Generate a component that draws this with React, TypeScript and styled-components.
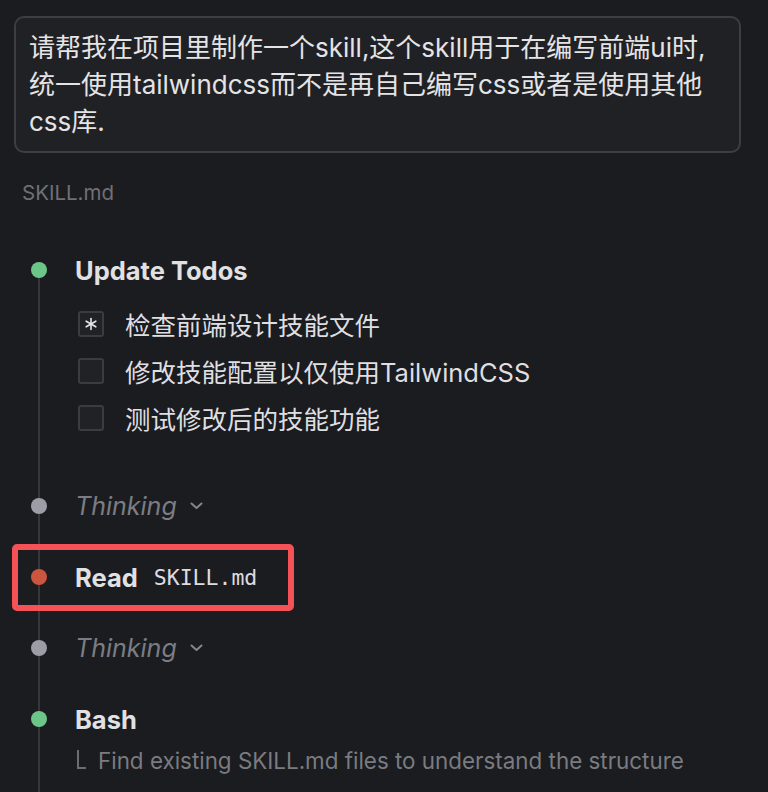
import React from "react";
import styled, { createGlobalStyle } from "styled-components";

const Global = createGlobalStyle`
  html, body { margin: 0; padding: 0; background: #1b1c1f; }
  body {
    font-family: "Inter", "Noto Sans CJK SC", sans-serif;
    color: #e2e2e5;
    -webkit-font-smoothing: antialiased;
  }
`;

const Page = styled.div`
  padding: 16px 27px 0 14px;
  height: 792px;
  box-sizing: border-box;
  overflow: hidden;
`;

const Prompt = styled.div`
  border: 2px solid #3d3e42;
  border-radius: 10px;
  background: #202125;
  padding: 11px 13px;
  font-size: 26px;
  line-height: 37px;
  color: #e4e4e7;
  font-family: "Inter", "Noto Sans CJK SC", sans-serif;
`;

const FileLabel = styled.div`
  margin-top: 26px;
  padding-left: 8px;
  font-size: 20.5px;
  line-height: 28px;
  color: #6f7075;
`;

const Timeline = styled.div`
  position: relative;
  margin-top: 45px;
  display: flex;
  flex-direction: column;
  gap: 35px;
  &::before {
    content: "";
    position: absolute;
    left: 24px;
    top: 18px;
    bottom: -200px;
    width: 2px;
    background: #36373b;
  }
`;

const Item = styled.div`
  position: relative;
`;

const Row = styled.div`
  display: grid;
  grid-template-columns: 61px 1fr;
  align-items: center;
  height: 36px;
`;

const Dot = styled.span<{ $color: string }>`
  position: relative;
  width: 16px;
  height: 16px;
  border-radius: 50%;
  margin-left: 17px;
  background: ${(p) => p.$color};
`;

const Title = styled.span`
  display: flex;
  align-items: center;
  gap: 16px;
  font-size: 25.5px;
  font-weight: 700;
  color: #e1e1e4;
`;

const Mono = styled.span`
  font-family: "DejaVu Sans Mono", "Liberation Mono", monospace;
  font-weight: 400;
  font-size: 21.5px;
  color: #dcdce0;
`;

const Thinking = styled.span`
  display: flex;
  align-items: center;
  gap: 13px;
  font-size: 25px;
  font-style: italic;
  color: #7c7d84;
`;

const TodoList = styled.div`
  margin-top: 12px;
  margin-bottom: 12px;
  padding-left: 64px;
`;

const Todo = styled.div`
  display: flex;
  align-items: center;
  gap: 21px;
  height: 47px;
  font-size: 25.5px;
  color: #dfdfe2;
  font-family: "Inter", "Noto Sans CJK SC", sans-serif;
`;

const Box = styled.span`
  width: 22px;
  height: 22px;
  border: 2px solid #3b3c40;
  border-radius: 3px;
  background: #212226;
  display: flex;
  align-items: center;
  justify-content: center;
  color: #e8e8eb;
`;

const Star = () => (
  <svg width="14" height="14" viewBox="0 0 14 14" fill="none">
    <g stroke="#e6e6e9" strokeWidth="1.6" strokeLinecap="round">
      <path d="M7 1.5 V12.5" />
      <path d="M2.2 4.2 L11.8 9.8" />
      <path d="M11.8 4.2 L2.2 9.8" />
    </g>
  </svg>
);

const Highlight = styled.div`
  position: absolute;
  left: -2px;
  top: -15px;
  width: 282px;
  height: 67px;
  box-sizing: border-box;
  border: 6px solid #f45256;
  border-radius: 5px;
  pointer-events: none;
`;

const Sub = styled.div`
  display: flex;
  align-items: center;
  gap: 12px;
  margin-top: 8px;
  padding-left: 63px;
  height: 30px;
  font-size: 22.4px;
  color: #7a7b81;
`;

const Corner = styled.span`
  width: 9px;
  height: 19px;
  border-left: 2px solid #6c6d73;
  border-bottom: 2px solid #6c6d73;
  box-sizing: border-box;
  margin-top: -2px;
`;

const Chevron = () => (
  <svg width="13" height="8" viewBox="0 0 13 8" fill="none">
    <path d="M1.5 1.5 L6.5 6 L11.5 1.5" stroke="#85868d" strokeWidth="2" strokeLinecap="round" strokeLinejoin="round" />
  </svg>
);

const GREEN = "#6cc68a";
const GRAY = "#9c9da5";
const RED = "#cc5540";

export default function App() {
  return (
    <>
      <Global />
      <Page>
        <Prompt>
          请帮我在项目里制作一个skill,这个skill用于在编写前端ui时,统一使用tailwindcss而不是再自己编写css或者是使用其他css库.
        </Prompt>
        <FileLabel>SKILL.md</FileLabel>
        <Timeline>
          <Item>
            <Row>
              <Dot $color={GREEN} />
              <Title>Update Todos</Title>
            </Row>
            <TodoList>
              <Todo>
                <Box>
                  <Star />
                </Box>
                检查前端设计技能文件
              </Todo>
              <Todo>
                <Box />
                修改技能配置以仅使用TailwindCSS
              </Todo>
              <Todo>
                <Box />
                测试修改后的技能功能
              </Todo>
            </TodoList>
          </Item>
          <Item>
            <Row>
              <Dot $color={GRAY} />
              <Thinking>
                Thinking <Chevron />
              </Thinking>
            </Row>
          </Item>
          <Item>
            <Highlight />
            <Row>
              <Dot $color={RED} />
              <Title>
                Read <Mono>SKILL.md</Mono>
              </Title>
            </Row>
          </Item>
          <Item>
            <Row>
              <Dot $color={GRAY} />
              <Thinking>
                Thinking <Chevron />
              </Thinking>
            </Row>
          </Item>
          <Item>
            <Row>
              <Dot $color={GREEN} />
              <Title>Bash</Title>
            </Row>
            <Sub>
              <Corner />
              Find existing SKILL.md files to understand the structure
            </Sub>
          </Item>
        </Timeline>
      </Page>
    </>
  );
}
